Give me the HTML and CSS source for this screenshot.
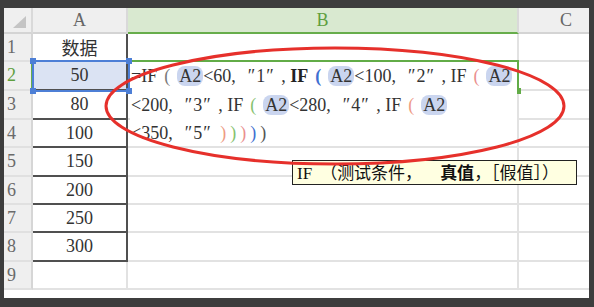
FILE: index.html
```html
<!DOCTYPE html>
<html>
<head>
<meta charset="utf-8">
<link rel="stylesheet" href="styles.css">
</head>
<body>
<div class="sheet">
  <div class="grid">
    <div class="corner"><span class="tri"></span></div>
    <div class="ch">A</div>
    <div class="ch ch-active">B</div>
    <div class="ch">C</div>

    <div class="rh">1</div><div class="cell a cjk">数据</div><div class="cell"></div><div class="cell"></div>
    <div class="rh rh-active">2</div><div class="cell a sel">50</div><div class="cell"></div><div class="cell"></div>
    <div class="rh">3</div><div class="cell a">80</div><div class="cell"></div><div class="cell"></div>
    <div class="rh">4</div><div class="cell a">100</div><div class="cell"></div><div class="cell"></div>
    <div class="rh">5</div><div class="cell a">150</div><div class="cell"></div><div class="cell"></div>
    <div class="rh">6</div><div class="cell a">200</div><div class="cell"></div><div class="cell"></div>
    <div class="rh">7</div><div class="cell a">250</div><div class="cell"></div><div class="cell"></div>
    <div class="rh">8</div><div class="cell a">300</div><div class="cell"></div><div class="cell"></div>
    <div class="rh">9</div><div class="cell"></div><div class="cell"></div><div class="cell"></div>
    <div class="tail"></div>
  </div>

  <div class="frame-b2"><span class="handle handle-g"></span></div>

  <div class="editor">
    <div class="ln">=IF<span class="p p0">(</span><span class="ref">A2</span>&lt;60<span class="c">,</span><span class="q ql">″</span>1<span class="q qr">″</span><span class="c">,</span><span class="fn">IF</span><span class="p p1">(</span><span class="ref">A2</span>&lt;100<span class="c">,</span><span class="q ql">″</span>2<span class="q qr">″</span><span class="c">,</span>IF<span class="p p2">(</span><span class="ref">A2</span></div>
    <div class="ln">&lt;200<span class="c">,</span><span class="q ql">″</span>3<span class="q qr">″</span><span class="c">,</span>IF<span class="p p3">(</span><span class="ref">A2</span>&lt;280<span class="c">,</span><span class="q ql">″</span>4<span class="q qr">″</span><span class="c">,</span>IF<span class="p p4">(</span><span class="ref">A2</span></div>
    <div class="ln">&lt;350<span class="c">,</span><span class="q ql">″</span>5<span class="q qr">″</span><span class="k k4">)</span><span class="k k3">)</span><span class="k k2">)</span><span class="k k1">)</span><span class="k k0">)</span></div>
  </div>

  <div class="frame-a2">
    <span class="handle h-tl"></span><span class="handle h-tr"></span>
    <span class="handle h-bl"></span><span class="handle h-br"></span>
  </div>

  <div class="tooltip"><span class="tt-fn">IF</span><span class="tt-open">（</span>测试条件，<b class="tt-b">真值</b>，［假值］）</div>

  <svg class="mark" width="585" height="290" viewBox="0 0 585 290">
    <ellipse cx="331" cy="98" rx="229" ry="58" fill="none" stroke="#e6302b" stroke-width="3"/>
  </svg>
</div>
</body>
</html>
```

FILE: styles.css
```css
* { box-sizing: border-box; }

html, body { margin: 0; }

body {
  width: 594px;
  height: 307px;
  overflow: hidden;
  background: #3d3d3d;
  padding: 8px 5px 0 4px;
  font-family: "Liberation Serif", "Noto Sans CJK SC", serif;
}

.sheet {
  position: relative;
  width: 585px;
  height: 290px;
  background: #fff;
  overflow: hidden;
}

.grid {
  display: grid;
  grid-template-columns: 29px 95px 391px 96px;
  grid-template-rows: 26px 28px 29px 29px 28px 29px 28px 28px 29px 28px 8px;
}

.corner {
  background: #efefef;
  border-right: 2px solid #d9d9d9;
  border-bottom: 2px solid #d4d4d4;
  display: flex;
  justify-content: flex-end;
  align-items: flex-end;
  padding: 0 5px 4px 0;
}

.tri {
  width: 0;
  height: 0;
  border-left: 13px solid transparent;
  border-bottom: 12px solid #c4c4c4;
}

.ch {
  background: #efefef;
  border-right: 2px solid #d9d9d9;
  border-bottom: 2px solid #d4d4d4;
  display: flex;
  align-items: center;
  justify-content: center;
  color: #666;
  font-size: 18px;
}

.ch-active {
  background: #d9e9d0;
  color: #5f9f3e;
  border-bottom-color: #67ad4b;
}

.rh {
  background: #efefef;
  border-right: 2px solid #d6d6d6;
  border-bottom: 2px solid #e0e0e0;
  display: flex;
  align-items: center;
  padding-left: 3px;
  color: #6a6a6a;
  font-size: 18px;
}

.rh-active {
  color: #5f9f3e;
  border-right-color: #67ad4b;
}

.cell {
  border-right: 2px solid #e2e2e2;
  border-bottom: 2px solid #e2e2e2;
  display: flex;
  align-items: center;
  justify-content: center;
  font-size: 18px;
  color: #333;
}

.cell.a {
  border-right-color: #505050;
  border-bottom-color: #505050;
}

.cell.sel { background: #dbe3f3; }

.cjk {
  font-family: "Noto Sans CJK SC", sans-serif;
  font-size: 18px;
}

.tail { grid-column: 1 / -1; }

/* selection frames (overlays) */
.frame-b2 {
  position: absolute;
  left: 124px;
  top: 52px;
  width: 391px;
  height: 32px;
  border: 2px solid #62ac47;
}

.frame-a2 {
  position: absolute;
  left: 28px;
  top: 52px;
  width: 98px;
  height: 32px;
  border: 2px solid #4d7fd6;
}

.handle {
  position: absolute;
  width: 6px;
  height: 6px;
  background: #4d7fd6;
}

.h-tl { left: -4px; top: -4px; }
.h-tr { right: -4px; top: -4px; }
.h-bl { left: -4px; bottom: -4px; }
.h-br { right: -4px; bottom: -4px; }

.handle-g {
  background: #62ac47;
  right: -4px;
  bottom: -4px;
}

/* in-cell formula editor overlay */
.editor {
  position: absolute;
  left: 126px;
  top: 54px;
  width: 387px;
  height: 84px;
  background: #fff;
  padding-left: 1px;
  font-size: 18px;
  line-height: 28.5px;
  color: #333;
  white-space: nowrap;
}

.ln { height: 28.5px; }

.p {
  display: inline-block;
  width: 20px;
  text-align: center;
}

.p0 { color: #7a7a7a; }
.p1 { color: #3f6fd1; font-weight: bold; }
.p2 { color: #ea8f8f; }
.p3 { color: #86c26f; }
.p4 { color: #ee9b84; }

.k {
  display: inline-block;
  width: 10px;
  text-align: center;
}

.k4 { color: #ee9b84; }
.k3 { color: #86c26f; }
.k2 { color: #ea8f8f; }
.k1 { color: #3f6fd1; }
.k0 { color: #555; }

.fn { font-weight: bold; color: #222; }

.ref {
  background: #cad5ef;
  border-radius: 8px;
  padding: 0 2px;
}

.c {
  display: inline-block;
  width: 9px;
  text-align: left;
}

.q {
  display: inline-block;
  width: 16px;
}

.ql { text-align: right; padding-right: 1px; }
.qr { text-align: left; padding-left: 1px; }

/* function tooltip */
.tooltip {
  position: absolute;
  left: 288px;
  top: 152px;
  width: 285px;
  height: 25px;
  border: 1px solid #222;
  background: #ffffe1;
  padding-left: 4px;
  font-size: 17px;
  line-height: 22px;
  color: #111;
  white-space: nowrap;
}

.tt-open { margin-left: 8px; }

.tt-b {
  margin-left: 18px;
  font-family: "Noto Sans CJK SC", sans-serif;
  font-weight: bold;
}

.mark {
  position: absolute;
  left: 0;
  top: 0;
  overflow: visible;
}
```
